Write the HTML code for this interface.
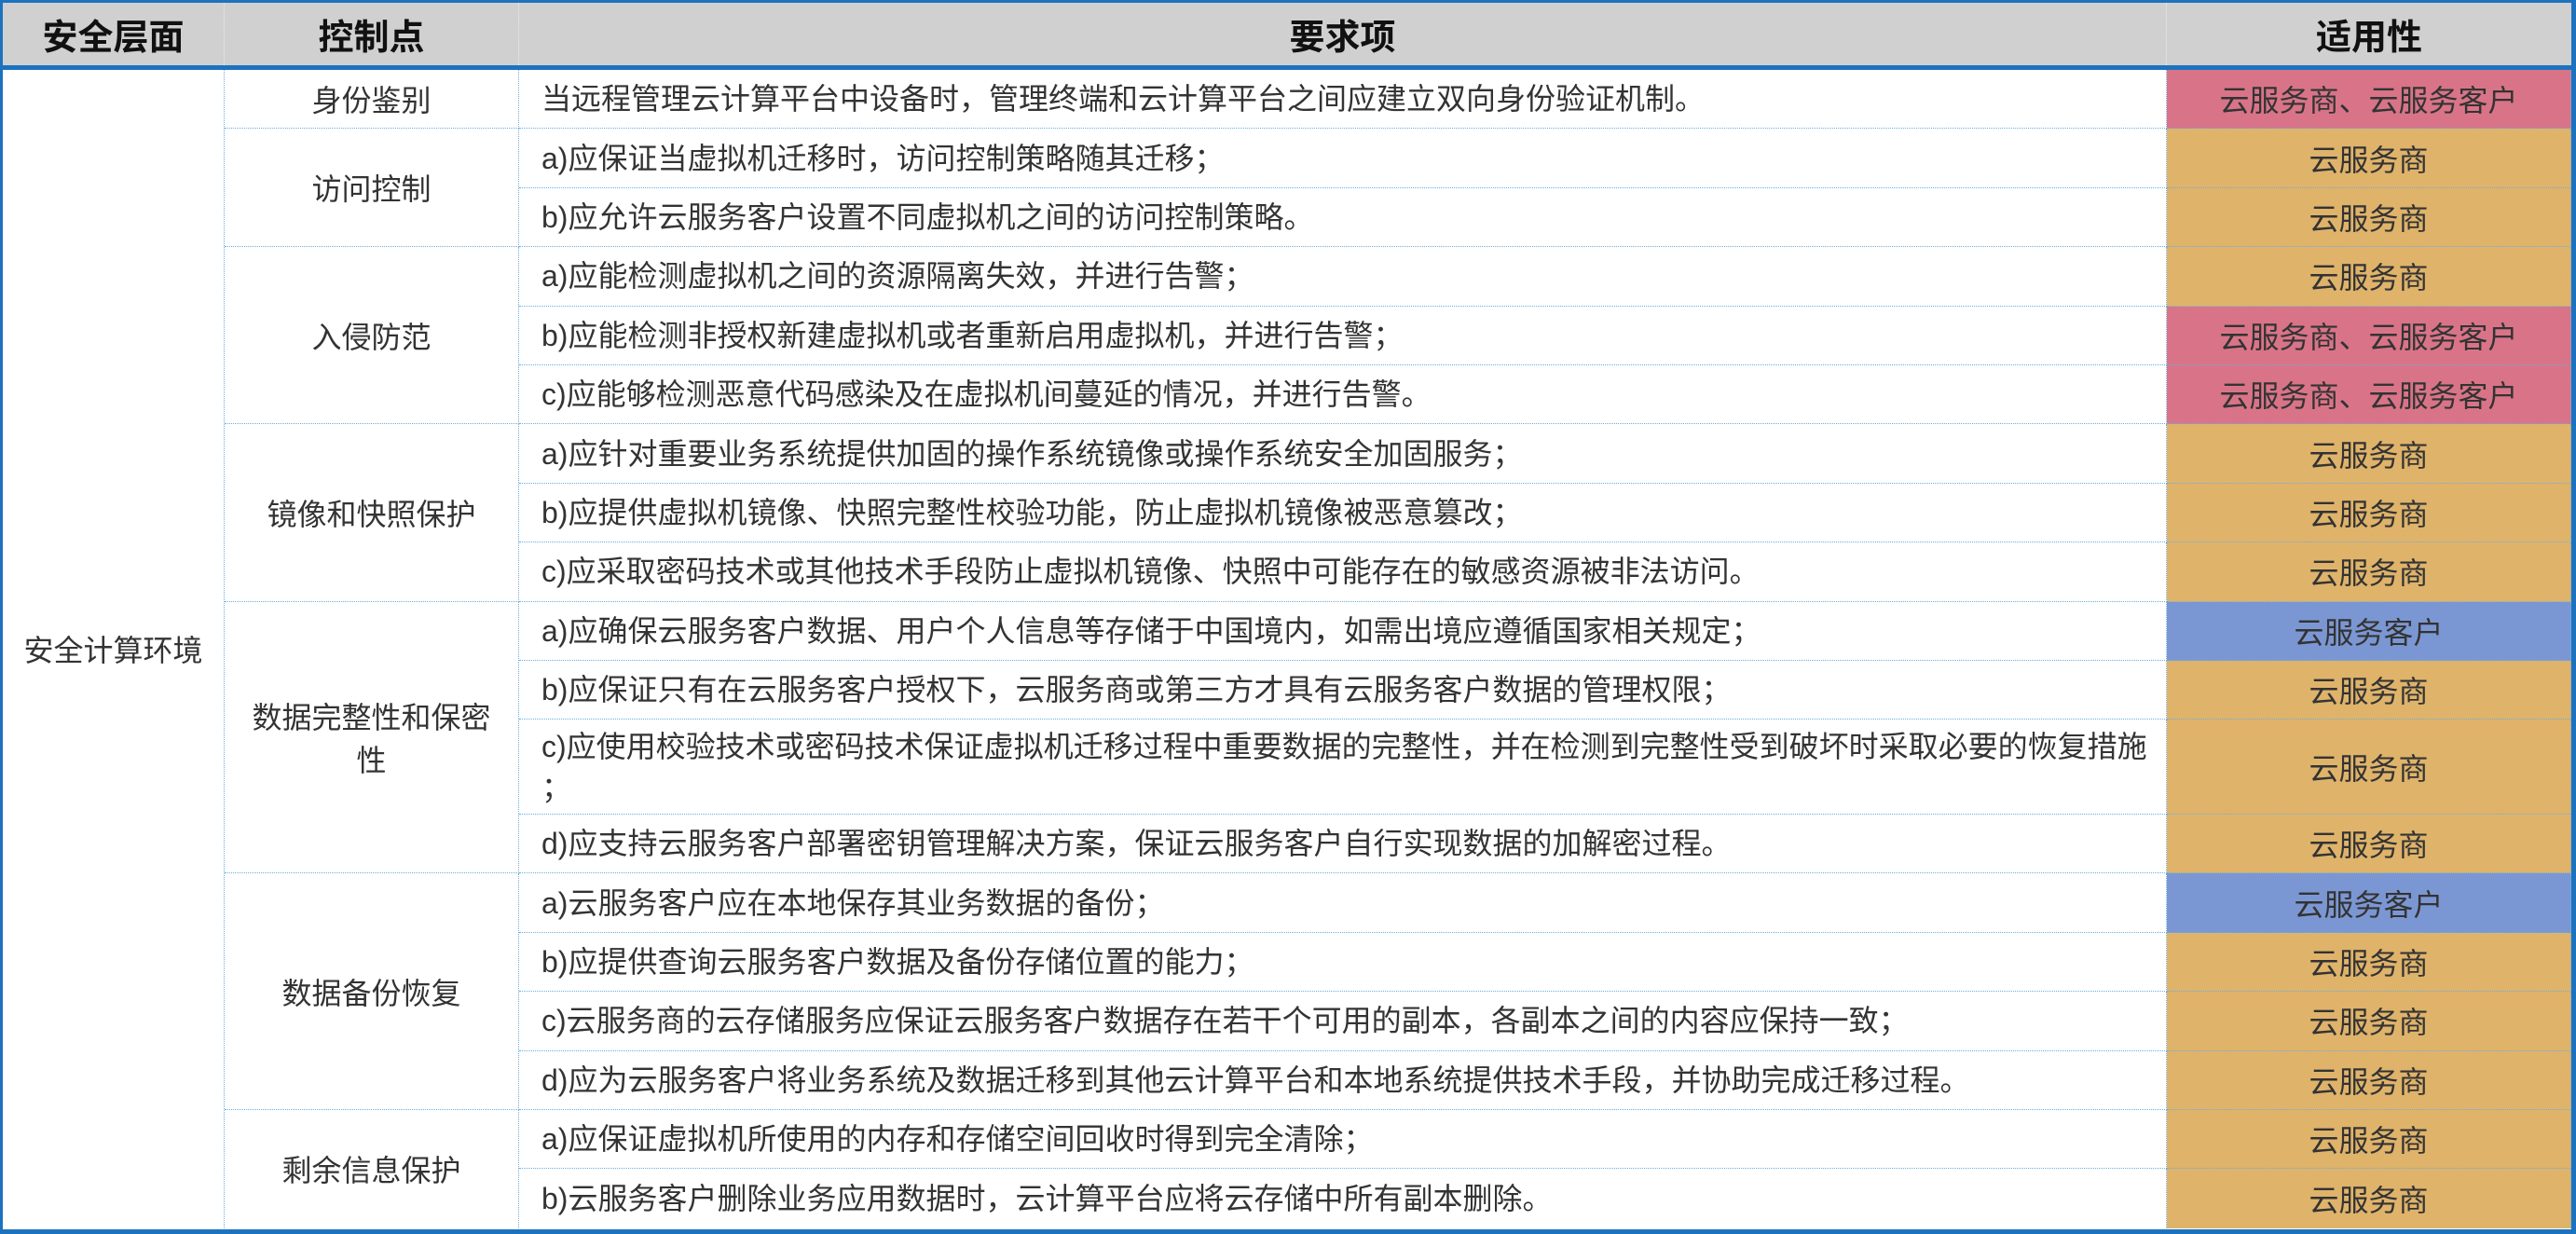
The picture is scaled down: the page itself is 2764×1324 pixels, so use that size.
<!DOCTYPE html>
<html><head><meta charset="utf-8"><style>
body{margin:0;width:2764px;height:1324px;overflow:hidden;background:#fff;font-family:"Liberation Sans","Noto Sans CJK SC",sans-serif;}
#wrap{position:absolute;left:0;top:0;width:2756px;height:1316px;border:3px solid #1c72bf;border-right-width:5px;border-bottom-width:5px;}
#head{position:absolute;left:0;top:0;width:2756px;height:67px;background:#d0d0d0;border-bottom:5px solid #1c72bf;display:grid;grid-template-columns:238px 316px 1768px 434px;}
#head div{display:flex;align-items:center;justify-content:center;font-weight:bold;font-size:38px;color:#111;border-right:1px dotted #eee;}
#grid{position:absolute;left:0;top:72px;width:2756px;height:1244px;display:grid;grid-template-columns:238px 316px 1768px 434px;
grid-template-rows:repeat(11,63.4px) 101.8px repeat(7,63.4px);}
#grid div{box-sizing:border-box;border-right:1.5px dotted #6aaee0;border-bottom:1.5px dotted #6aaee0;display:flex;align-items:center;font-size:32px;color:#333;}
.c{justify-content:center;text-align:center;}
.t{padding-left:24px;padding-right:4px;line-height:44px;}
.p{background:#d97488;}.o{background:#dfb36a;}.b{background:#7b97d3;}
#grid div.last{border-bottom:none;}
</style></head><body><div id="wrap">
<div id="head"><div>安全层面</div><div>控制点</div><div>要求项</div><div style="border-right:none">适用性</div></div>
<div id="grid">
<div class="c last" style="grid-row:1/20;grid-column:1">安全计算环境</div>
<div class="c" style="grid-row:1/2;grid-column:2">身份鉴别</div>
<div class="c" style="grid-row:2/4;grid-column:2">访问控制</div>
<div class="c" style="grid-row:4/7;grid-column:2">入侵防范</div>
<div class="c" style="grid-row:7/10;grid-column:2">镜像和快照保护</div>
<div class="c" style="grid-row:10/14;grid-column:2;padding:0 20px">数据完整性和保密性</div>
<div class="c" style="grid-row:14/18;grid-column:2">数据备份恢复</div>
<div class="c last" style="grid-row:18/20;grid-column:2">剩余信息保护</div>

<div class="t" style="grid-column:3">当远程管理云计算平台中设备时，管理终端和云计算平台之间应建立双向身份验证机制。</div><div class="c p">云服务商、云服务客户</div>
<div class="t" style="grid-column:3">a)应保证当虚拟机迁移时，访问控制策略随其迁移；</div><div class="c o">云服务商</div>
<div class="t" style="grid-column:3">b)应允许云服务客户设置不同虚拟机之间的访问控制策略。</div><div class="c o">云服务商</div>
<div class="t" style="grid-column:3">a)应能检测虚拟机之间的资源隔离失效，并进行告警；</div><div class="c o">云服务商</div>
<div class="t" style="grid-column:3">b)应能检测非授权新建虚拟机或者重新启用虚拟机，并进行告警；</div><div class="c p">云服务商、云服务客户</div>
<div class="t" style="grid-column:3">c)应能够检测恶意代码感染及在虚拟机间蔓延的情况，并进行告警。</div><div class="c p">云服务商、云服务客户</div>
<div class="t" style="grid-column:3">a)应针对重要业务系统提供加固的操作系统镜像或操作系统安全加固服务；</div><div class="c o">云服务商</div>
<div class="t" style="grid-column:3">b)应提供虚拟机镜像、快照完整性校验功能，防止虚拟机镜像被恶意篡改；</div><div class="c o">云服务商</div>
<div class="t" style="grid-column:3">c)应采取密码技术或其他技术手段防止虚拟机镜像、快照中可能存在的敏感资源被非法访问。</div><div class="c o">云服务商</div>
<div class="t" style="grid-column:3">a)应确保云服务客户数据、用户个人信息等存储于中国境内，如需出境应遵循国家相关规定；</div><div class="c b">云服务客户</div>
<div class="t" style="grid-column:3">b)应保证只有在云服务客户授权下，云服务商或第三方才具有云服务客户数据的管理权限；</div><div class="c o">云服务商</div>
<div class="t" style="grid-column:3">c)应使用校验技术或密码技术保证虚拟机迁移过程中重要数据的完整性，并在检测到完整性受到破坏时采取必要的恢复措施<br>；</div><div class="c o">云服务商</div>
<div class="t" style="grid-column:3">d)应支持云服务客户部署密钥管理解决方案，保证云服务客户自行实现数据的加解密过程。</div><div class="c o">云服务商</div>
<div class="t" style="grid-column:3">a)云服务客户应在本地保存其业务数据的备份；</div><div class="c b">云服务客户</div>
<div class="t" style="grid-column:3">b)应提供查询云服务客户数据及备份存储位置的能力；</div><div class="c o">云服务商</div>
<div class="t" style="grid-column:3">c)云服务商的云存储服务应保证云服务客户数据存在若干个可用的副本，各副本之间的内容应保持一致；</div><div class="c o">云服务商</div>
<div class="t" style="grid-column:3">d)应为云服务客户将业务系统及数据迁移到其他云计算平台和本地系统提供技术手段，并协助完成迁移过程。</div><div class="c o">云服务商</div>
<div class="t" style="grid-column:3">a)应保证虚拟机所使用的内存和存储空间回收时得到完全清除；</div><div class="c o">云服务商</div>
<div class="t last" style="grid-column:3">b)云服务客户删除业务应用数据时，云计算平台应将云存储中所有副本删除。</div><div class="c o last">云服务商</div>
</div></div></body></html>
